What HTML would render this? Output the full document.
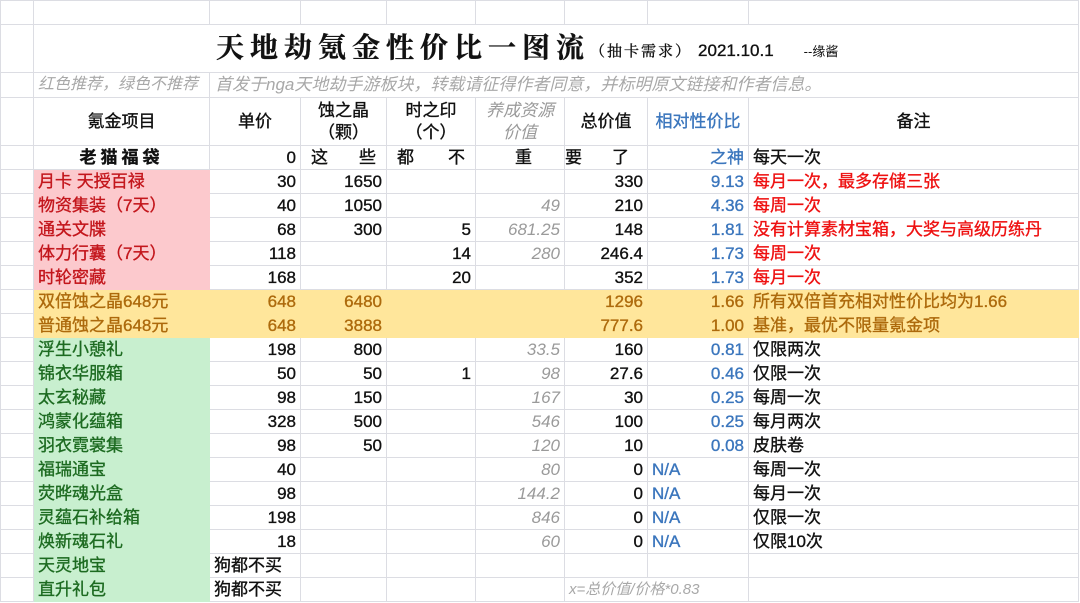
<!DOCTYPE html>
<html><head><meta charset="utf-8"><style>
*{margin:0;padding:0;box-sizing:border-box}
body{width:1080px;height:603px;background:#fff;overflow:hidden;font-family:"Liberation Sans","Noto Sans CJK SC",sans-serif;font-size:17px;color:#111;-webkit-text-stroke:0.35px}
table{border-collapse:collapse;table-layout:fixed;position:absolute;left:0;top:0;width:1078px}
td{border:1px solid #dcdde3;height:24px;padding:0 4px;white-space:nowrap;overflow:visible;line-height:22px}
.r{text-align:right}.c{text-align:center}
.it{font-style:italic;color:#9a9a9a;font-weight:normal;-webkit-text-stroke:0}
.p{background:#fcc9cd;border-color:#fcc9cd;color:#c3161c}
.y td{background:#ffe69b;border-color:#ffe69b;color:#ad6a0c}
.y td.e{background:#fff;border-color:#dcdde3}
.g{background:#c8efcf;border-color:#c8efcf;color:#1d6b21}
.b{color:#3b76bd}
.red{color:#ee1111}
</style></head><body>
<table>
<colgroup><col style="width:33px"><col style="width:176px"><col style="width:91px"><col style="width:86px"><col style="width:89px"><col style="width:89px"><col style="width:83px"><col style="width:101px"><col style="width:330px"></colgroup>
<tr style="height:24px"><td></td><td></td><td></td><td></td><td></td><td></td><td></td><td></td><td></td></tr>
<tr style="height:48px"><td></td><td colspan="8" style="padding-left:182px;vertical-align:middle"><span style="font-family:'Noto Serif CJK SC',serif;font-weight:bold;font-size:28px;letter-spacing:6px;position:relative;top:1px">天地劫氪金性价比一图流</span><span style="font-family:'Noto Serif CJK SC',serif;font-size:15px;letter-spacing:2px">（抽卡需求）</span><span style="font-size:17px;margin-left:6px">2021.10.1</span><span style="font-size:13px;margin-left:30px;-webkit-text-stroke:0">--缘酱</span></td></tr>
<tr style="height:25px"><td></td><td class="it" style="color:#a8a8a8;font-size:16px">红色推荐，绿色不推荐</td><td colspan="7" class="it" style="color:#a8a8a8;font-size:17px;padding-left:5px">首发于nga天地劫手游板块，转载请征得作者同意，并标明原文链接和作者信息。</td></tr>
<tr style="height:48px"><td></td><td class="c">氪金项目</td><td class="c">单价</td><td class="c">蚀之晶<br>（颗）</td><td class="c">时之印<br>（个）</td><td class="c it">养成资源<br>价值</td><td class="c">总价值</td><td class="c b">相对性价比</td><td class="c">备注</td></tr>
<tr><td></td><td class="c" style="font-weight:bold;letter-spacing:4px">老猫福袋</td><td class="r">0</td><td style="text-align:justify;text-align-last:justify;padding:0 10px">这 些</td><td style="text-align:justify;text-align-last:justify;padding:0 10px 0 10px">都 不</td><td style="padding-left:39px">重</td><td style="text-align:justify;text-align-last:justify;padding:0 18px 0 0">要 了</td><td class="r b">之神</td><td>每天一次</td></tr>
<tr><td></td><td class="p">月卡 天授百禄</td><td class="r">30</td><td class="r">1650</td><td></td><td></td><td class="r">330</td><td class="r b">9.13</td><td class="red">每月一次，最多存储三张</td></tr>
<tr><td></td><td class="p">物资集装（7天）</td><td class="r">40</td><td class="r">1050</td><td></td><td class="r it">49</td><td class="r">210</td><td class="r b">4.36</td><td class="red">每周一次</td></tr>
<tr><td></td><td class="p">通关文牒</td><td class="r">68</td><td class="r">300</td><td class="r">5</td><td class="r it">681.25</td><td class="r">148</td><td class="r b">1.81</td><td class="red">没有计算素材宝箱，大奖与高级历练丹</td></tr>
<tr><td></td><td class="p">体力行囊（7天）</td><td class="r">118</td><td></td><td class="r">14</td><td class="r it">280</td><td class="r">246.4</td><td class="r b">1.73</td><td class="red">每周一次</td></tr>
<tr><td></td><td class="p">时轮密藏</td><td class="r">168</td><td></td><td class="r">20</td><td></td><td class="r">352</td><td class="r b">1.73</td><td class="red">每月一次</td></tr>
<tr class="y"><td class="e"></td><td>双倍蚀之晶648元</td><td class="r">648</td><td class="r">6480</td><td></td><td></td><td class="r">1296</td><td class="r">1.66</td><td>所有双倍首充相对性价比均为1.66</td></tr>
<tr class="y"><td class="e"></td><td>普通蚀之晶648元</td><td class="r">648</td><td class="r">3888</td><td></td><td></td><td class="r">777.6</td><td class="r">1.00</td><td>基准，最优不限量氪金项</td></tr>
<tr><td></td><td class="g">浮生小憩礼</td><td class="r">198</td><td class="r">800</td><td></td><td class="r it">33.5</td><td class="r">160</td><td class="r b">0.81</td><td>仅限两次</td></tr>
<tr><td></td><td class="g">锦衣华服箱</td><td class="r">50</td><td class="r">50</td><td class="r">1</td><td class="r it">98</td><td class="r">27.6</td><td class="r b">0.46</td><td>仅限一次</td></tr>
<tr><td></td><td class="g">太玄秘藏</td><td class="r">98</td><td class="r">150</td><td></td><td class="r it">167</td><td class="r">30</td><td class="r b">0.25</td><td>每周一次</td></tr>
<tr><td></td><td class="g">鸿蒙化蕴箱</td><td class="r">328</td><td class="r">500</td><td></td><td class="r it">546</td><td class="r">100</td><td class="r b">0.25</td><td>每月两次</td></tr>
<tr><td></td><td class="g">羽衣霓裳集</td><td class="r">98</td><td class="r">50</td><td></td><td class="r it">120</td><td class="r">10</td><td class="r b">0.08</td><td>皮肤卷</td></tr>
<tr><td></td><td class="g">福瑞通宝</td><td class="r">40</td><td></td><td></td><td class="r it">80</td><td class="r">0</td><td class="b">N/A</td><td>每周一次</td></tr>
<tr><td></td><td class="g">荧晔魂光盒</td><td class="r">98</td><td></td><td></td><td class="r it">144.2</td><td class="r">0</td><td class="b">N/A</td><td>每月一次</td></tr>
<tr><td></td><td class="g">灵蕴石补给箱</td><td class="r">198</td><td></td><td></td><td class="r it">846</td><td class="r">0</td><td class="b">N/A</td><td>仅限一次</td></tr>
<tr><td></td><td class="g">焕新魂石礼</td><td class="r">18</td><td></td><td></td><td class="r it">60</td><td class="r">0</td><td class="b">N/A</td><td>仅限10次</td></tr>
<tr><td></td><td class="g">天灵地宝</td><td>狗都不买</td><td></td><td></td><td></td><td></td><td></td><td></td></tr>
<tr><td></td><td class="g">直升礼包</td><td>狗都不买</td><td></td><td></td><td></td><td colspan="2" class="it" style="font-size:15px;color:#a8a8a8">x=总价值/价格*0.83</td><td></td></tr>
</table>
</body></html>
